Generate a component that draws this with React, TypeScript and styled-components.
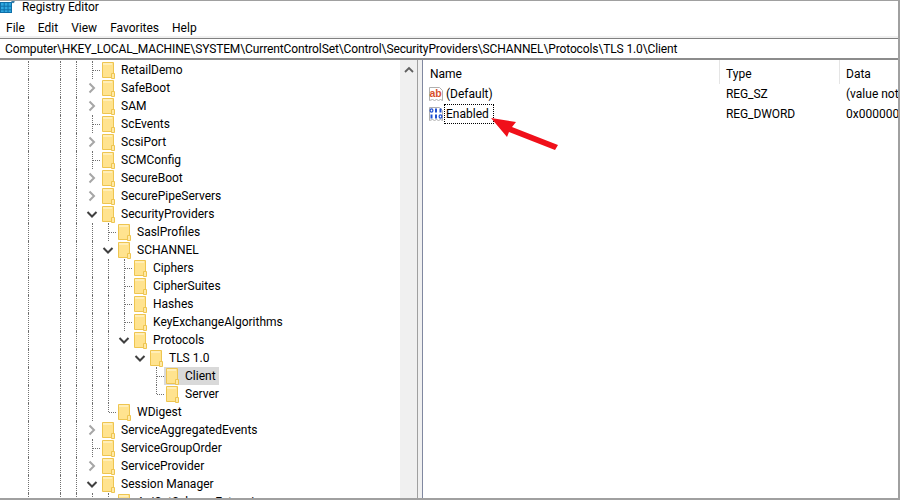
import React from "react";
import styled, { createGlobalStyle } from "styled-components";

const GlobalStyle = createGlobalStyle`
	html, body { margin: 0; padding: 0; background: #fff; }
	body { font-family: Roboto, "Noto Sans", sans-serif; font-size: 12px; color: #000; }
`;

type Cell = "" | "line" | "tee" | "elbow" | "right" | "down";

// SECTION Tree data. cells start at the guide x=12 and go 16px each
const treeRows: { label: string; cells: Cell[]; selected?: boolean }[] = [
	{ label: "RetailDemo", cells: ["", "line", "", "line", "line", "tee"] },
	{ label: "SafeBoot", cells: ["", "line", "", "line", "line", "right"] },
	{ label: "SAM", cells: ["", "line", "", "line", "line", "right"] },
	{ label: "ScEvents", cells: ["", "line", "", "line", "line", "tee"] },
	{ label: "ScsiPort", cells: ["", "line", "", "line", "line", "right"] },
	{ label: "SCMConfig", cells: ["", "line", "", "line", "line", "tee"] },
	{ label: "SecureBoot", cells: ["", "line", "", "line", "line", "right"] },
	{ label: "SecurePipeServers", cells: ["", "line", "", "line", "line", "right"] },
	{ label: "SecurityProviders", cells: ["", "line", "", "line", "line", "down"] },
	{ label: "SaslProfiles", cells: ["", "line", "", "line", "line", "line", "tee"] },
	{ label: "SCHANNEL", cells: ["", "line", "", "line", "line", "line", "down"] },
	{ label: "Ciphers", cells: ["", "line", "", "line", "line", "line", "line", "tee"] },
	{ label: "CipherSuites", cells: ["", "line", "", "line", "line", "line", "line", "tee"] },
	{ label: "Hashes", cells: ["", "line", "", "line", "line", "line", "line", "tee"] },
	{ label: "KeyExchangeAlgorithms", cells: ["", "line", "", "line", "line", "line", "line", "tee"] },
	{ label: "Protocols", cells: ["", "line", "", "line", "line", "line", "line", "down"] },
	{ label: "TLS 1.0", cells: ["", "line", "", "line", "line", "line", "line", "", "down"] },
	{ label: "Client", cells: ["", "line", "", "line", "line", "line", "line", "", "", "tee"], selected: true },
	{ label: "Server", cells: ["", "line", "", "line", "line", "line", "line", "", "", "elbow"] },
	{ label: "WDigest", cells: ["", "line", "", "line", "line", "line", "elbow"] },
	{ label: "ServiceAggregatedEvents", cells: ["", "line", "", "line", "line", "right"] },
	{ label: "ServiceGroupOrder", cells: ["", "line", "", "line", "line", "tee"] },
	{ label: "ServiceProvider", cells: ["", "line", "", "line", "line", "right"] },
	{ label: "Session Manager", cells: ["", "line", "", "line", "line", "down"] },
	{ label: "ApiSetSchemaExtensions", cells: ["", "line", "", "line", "line", "line", "tee"] },
];

function Folder() {
	return (
		<FolderIcon viewBox="0 0 13 17">
			<path d="M.5.5h11v15H.5z" fill="#ffe38f" stroke="#eec550" />
			<path d="M1 1h9v2H1z" fill="#ffeeb8" />
			<path d="M9.5 11.5h3v5h-3z" fill="#ffe9a6" stroke="#eec550" />
		</FolderIcon>
	);
}

function Chevron({ down }: { down?: boolean }) {
	return (
		<ChevronIcon viewBox="0 0 16 18">
			<path
				d={down ? "M3.5 7l4.5 4.5L12.5 7" : "M5.5 4.5L10 9l-4.5 4.5"}
				fill="none"
				stroke={down ? "#404040" : "#a6a6a6"}
				strokeWidth="2"
			/>
		</ChevronIcon>
	);
}

const valueSheet = "M1.5 1.5h10l3 3v10l-2-1-2 1-2-1-2 1-2-1-3 1z";

// binary pattern of the REG_DWORD icon, drawn as dots and bars
function BinaryMark({ y, pattern }: { y: number; pattern: string }) {
	return (
		<>
			{pattern.split("").map((bit, index) =>
				bit === "0" ? (
					<ellipse key={index} cx={3.5 + index * 4.5} cy={y + 2} rx="1.4" ry="1.6" fill="none" stroke="#1f4fd0" strokeWidth="1.2" />
				) : (
					<path key={index} d={`M${3.5 + index * 4.5} ${y}v4`} stroke="#1f4fd0" strokeWidth="2" />
				),
			)}
		</>
	);
}

export default function App() {
	return (
		<Window>
			<GlobalStyle />
			<TitleBar>
				<AppIcon viewBox="0 0 15 15">
					<path d="M0 2h12v11H0z" fill="#2fa8e0" />
					<path d="M0 2.5h12M0 6.2h12M0 9.8h12M0 12.5h12M.5 2v11M4.2 2v11M8 2v11M11.5 2v11" stroke="#0f6fa8" strokeWidth="1" />
					<circle cx="13" cy="1.6" r="1.6" fill="#3b7ea8" />
				</AppIcon>
				<TitleText>Registry Editor</TitleText>
			</TitleBar>
			<MenuBar>
				{["File", "Edit", "View", "Favorites", "Help"].map((item) => (
					<MenuItem key={item}>{item}</MenuItem>
				))}
			</MenuBar>
			<AddressBar>Computer\HKEY_LOCAL_MACHINE\SYSTEM\CurrentControlSet\Control\SecurityProviders\SCHANNEL\Protocols\TLS 1.0\Client</AddressBar>
			<Panes>
				<TreePane>
					<Tree>
						{treeRows.map(({ label, cells, selected }) => (
							<TreeRow key={label}>
								{cells.map((cell, index) => (
									<GuideCell key={index} $kind={cell}>
										{cell === "right" && <Chevron />}
										{cell === "down" && <Chevron down />}
									</GuideCell>
								))}
								<RowLabel $selected={selected}>
									<Folder />
									<LabelText>{label}</LabelText>
								</RowLabel>
							</TreeRow>
						))}
					</Tree>
					<ScrollBar>
						<svg width="10" height="8" viewBox="0 0 10 8">
							<path d="M1 6l4-4 4 4" fill="none" stroke="#606060" strokeWidth="1.8" />
						</svg>
					</ScrollBar>
				</TreePane>
				<Splitter />
				<ValuePane>
					<HeaderRow>
						<NameColumn>Name</NameColumn>
						<TypeColumn>Type</TypeColumn>
						<DataColumn>Data</DataColumn>
					</HeaderRow>
					<ValueRow>
						<NameCell>
							<ValueIcon viewBox="0 0 16 16">
								<path d={valueSheet} fill="#fff" stroke="#b0b0b0" />
								<text x="1.5" y="11" fontSize="10.5" fontWeight="700" fill="#d8502c" fontFamily="Liberation Sans, sans-serif">ab</text>
							</ValueIcon>
							<ValueName>(Default)</ValueName>
						</NameCell>
						<TypeCell>REG_SZ</TypeCell>
						<DataCell>(value not set)</DataCell>
					</ValueRow>
					<ValueRow>
						<NameCell>
							<ValueIcon viewBox="0 0 16 16">
								<path d={valueSheet} fill="#fff" stroke="#b0b0b0" />
								<BinaryMark y={2.5} pattern="011" />
								<BinaryMark y={8.5} pattern="110" />
							</ValueIcon>
							<FocusedName>Enabled</FocusedName>
						</NameCell>
						<TypeCell>REG_DWORD</TypeCell>
						<DataCell>0x00000000 (0)</DataCell>
					</ValueRow>
				</ValuePane>
			</Panes>
			<Arrow viewBox="0 0 80 45">
				<path d="M6 8L31 12l-4 5 46 18-3 5-46-18-2 5z" fill="#f0101a" />
			</Arrow>
		</Window>
	);
}

const Window = styled.div`
	position: relative;
	width: 900px;
	height: 500px;
	box-sizing: border-box;
	display: flex;
	flex-direction: column;
	overflow: hidden;
	background: #fff;
	border-top: 1px solid #a0a0a0;
	border-right: 2px solid #a0a0a0;
	border-bottom: 2px solid #a0a0a0;
`;

const TitleBar = styled.div`
	height: 14px;
	display: flex;
	align-items: center;
	gap: 7px;
	font-size: 12px;
	line-height: 14px;
`;

const TitleText = styled.span`
	margin-top: -2px;
	letter-spacing: -0.05px;
`;

const AppIcon = styled.svg`
	width: 15px;
	height: 15px;
	margin-top: -2px;
	flex-shrink: 0;
`;

const MenuBar = styled.div`
	height: 21px;
	display: flex;
	align-items: center;
	padding-top: 4px;
	box-sizing: border-box;
`;

const MenuItem = styled.span`
	padding: 0 7px 0 6px;
`;

const AddressBar = styled.div`
	height: 24px;
	box-sizing: border-box;
	display: flex;
	align-items: center;
	padding: 1px 0 0 5px;
	border-top: 2px solid #f0f0f0;
	box-shadow: inset 0 1px 0 #808080;
	border-bottom: 2px solid #8c8c8c;
	white-space: nowrap;
	overflow: hidden;
	letter-spacing: -0.12px;
`;

const Panes = styled.div`
	flex: 1;
	min-height: 0;
	display: flex;
	overflow: hidden;
`;

const TreePane = styled.div`
	width: 417px;
	display: flex;
	flex-shrink: 0;
`;

const Tree = styled.div`
	width: 400px;
	overflow: hidden;
	padding-top: 1px;
`;

const TreeRow = styled.div`
	height: 18px;
	display: flex;
`;

const GuideCell = styled.span<{ $kind: Cell }>`
	position: relative;
	flex: 0 0 16px;
	height: 18px;
	&:first-child {
		margin-left: 4px;
	}
	&::before {
		content: "";
		position: absolute;
		left: 8px;
		top: 0;
		height: ${({ $kind }) => ($kind === "elbow" ? "9px" : "18px")};
		border-left: ${({ $kind }) => ($kind && $kind !== "right" && $kind !== "down" ? "1px dotted #707070" : "none")};
	}
	&::after {
		content: "";
		position: absolute;
		left: 9px;
		top: 9px;
		width: 7px;
		border-top: ${({ $kind }) => ($kind === "tee" || $kind === "elbow" ? "1px dotted #707070" : "none")};
	}
`;

const ChevronIcon = styled.svg`
	position: absolute;
	left: 0;
	top: 0;
	width: 16px;
	height: 18px;
`;

const RowLabel = styled.span<{ $selected?: boolean }>`
	display: flex;
	align-items: center;
	height: 18px;
	padding: 0 3px 0 2px;
	background: ${({ $selected }) => ($selected ? "#d9d9d9" : "transparent")};
`;

const FolderIcon = styled.svg`
	width: 13px;
	height: 17px;
	flex-shrink: 0;
`;

const LabelText = styled.span`
	margin-left: 6px;
	white-space: nowrap;
	line-height: 18px;
`;

const ScrollBar = styled.div`
	width: 17px;
	background: #f0f0f0;
	display: flex;
	justify-content: center;
	padding-top: 6px;
	box-sizing: border-box;
	svg {
		display: block;
	}
`;

const Splitter = styled.div`
	width: 6px;
	flex-shrink: 0;
	box-sizing: border-box;
	background: #f0f0f0;
	border-left: 1px solid #a0a0a0;
	border-right: 1px solid #8088a0;
`;

const ValuePane = styled.div`
	flex: 1;
	min-width: 0;
	overflow: hidden;
`;

const HeaderRow = styled.div`
	height: 24px;
	display: flex;
	align-items: center;
`;

const HeaderColumn = styled.div`
	box-sizing: border-box;
	height: 24px;
	line-height: 24px;
	padding: 2px 0 0 6px;
	flex-shrink: 0;
	white-space: nowrap;
`;

const NameColumn = styled(HeaderColumn)`
	width: 297px;
	padding-left: 7px;
	border-right: 1px solid #e5e5e5;
`;

const TypeColumn = styled(HeaderColumn)`
	width: 120px;
	border-right: 1px solid #e5e5e5;
`;

const DataColumn = styled(HeaderColumn)`
	width: 100px;
`;

const ValueRow = styled.div`
	height: 20px;
	display: flex;
	align-items: center;
`;

const NameCell = styled.div`
	width: 297px;
	flex-shrink: 0;
	display: flex;
	align-items: center;
	padding-left: 5px;
	box-sizing: border-box;
`;

const ValueIcon = styled.svg`
	width: 16px;
	height: 16px;
	flex-shrink: 0;
`;

const ValueName = styled.span`
	margin-left: 1px;
	padding: 0 1px;
	white-space: nowrap;
`;

const FocusedName = styled(ValueName)`
	outline: 1px dotted #000;
	padding: 0 4px 0 1px;
	line-height: 18px;
`;

const TypeCell = styled.div`
	width: 120px;
	flex-shrink: 0;
	padding-left: 6px;
	box-sizing: border-box;
	white-space: nowrap;
	letter-spacing: -0.1px;
`;

const DataCell = styled.div`
	padding-left: 6px;
	white-space: nowrap;
`;

const Arrow = styled.svg`
	position: absolute;
	left: 485px;
	top: 109px;
	width: 80px;
	height: 45px;
`;
